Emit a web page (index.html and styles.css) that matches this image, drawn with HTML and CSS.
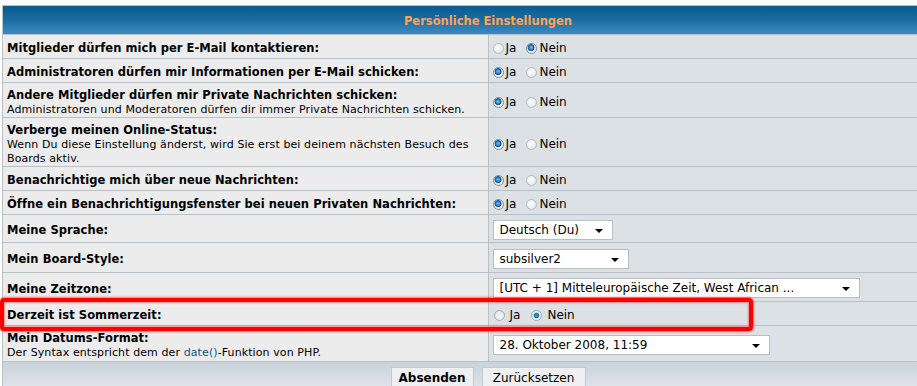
FILE: index.html
```html
<!DOCTYPE html>
<html lang="de">
<head>
<meta charset="utf-8">
<title>Persönliche Einstellungen</title>
<link rel="stylesheet" href="styles.css">
</head>
<body>
<div class="wrap">
<table class="tablebg">
  <tr class="r-head"><th colspan="2" class="head">Persönliche Einstellungen</th></tr>
  <tr>
    <td class="row1"><b class="genmed">Mitglieder dürfen mich per E-Mail kontaktieren:</b></td>
    <td class="row2"><span class="radios"><span class="radio"></span><span class="lbl">Ja</span><span class="radio on"></span><span class="lbl">Nein</span></span></td>
  </tr>
  <tr>
    <td class="row1"><b class="genmed">Administratoren dürfen mir Informationen per E-Mail schicken:</b></td>
    <td class="row2"><span class="radios"><span class="radio on"></span><span class="lbl">Ja</span><span class="radio"></span><span class="lbl">Nein</span></span></td>
  </tr>
  <tr class="r-two">
    <td class="row1"><b class="genmed">Andere Mitglieder dürfen mir Private Nachrichten schicken:</b><br><span class="gensmall">Administratoren und Moderatoren dürfen dir immer Private Nachrichten schicken.</span></td>
    <td class="row2"><span class="radios"><span class="radio on"></span><span class="lbl">Ja</span><span class="radio"></span><span class="lbl">Nein</span></span></td>
  </tr>
  <tr class="r-three">
    <td class="row1"><b class="genmed">Verberge meinen Online-Status:</b><br><span class="gensmall">Wenn Du diese Einstellung änderst, wird Sie erst bei deinem nächsten Besuch des Boards aktiv.</span></td>
    <td class="row2"><span class="radios"><span class="radio on"></span><span class="lbl">Ja</span><span class="radio"></span><span class="lbl">Nein</span></span></td>
  </tr>
  <tr>
    <td class="row1"><b class="genmed">Benachrichtige mich über neue Nachrichten:</b></td>
    <td class="row2"><span class="radios"><span class="radio on"></span><span class="lbl">Ja</span><span class="radio"></span><span class="lbl">Nein</span></span></td>
  </tr>
  <tr>
    <td class="row1"><b class="genmed">Öffne ein Benachrichtigungsfenster bei neuen Privaten Nachrichten:</b></td>
    <td class="row2"><span class="radios"><span class="radio on"></span><span class="lbl">Ja</span><span class="radio"></span><span class="lbl">Nein</span></span></td>
  </tr>
  <tr class="r-sel">
    <td class="row1"><b class="genmed">Meine Sprache:</b></td>
    <td class="row2 has-select"><span class="select w-lang"><span>Deutsch (Du)</span><i class="arrow"></i></span></td>
  </tr>
  <tr class="r-sel2">
    <td class="row1"><b class="genmed">Mein Board-Style:</b></td>
    <td class="row2 has-select"><span class="select w-style"><span>subsilver2</span><i class="arrow"></i></span></td>
  </tr>
  <tr class="r-sel3">
    <td class="row1"><b class="genmed">Meine Zeitzone:</b></td>
    <td class="row2 has-select"><span class="select w-tz"><span>[UTC + 1] Mitteleuropäische Zeit, West African ...</span><i class="arrow"></i></span></td>
  </tr>
  <tr>
    <td class="row1"><b class="genmed">Derzeit ist Sommerzeit:</b></td>
    <td class="row2"><span class="radios big"><span class="radio xp"></span><span class="lbl">Ja</span><span class="radio xp on"></span><span class="lbl">Nein</span></span></td>
  </tr>
  <tr class="r-date">
    <td class="row1"><b class="genmed">Mein Datums-Format:</b><br><span class="gensmall">Der Syntax entspricht dem der <a href="#" class="link">date()</a>-Funktion von PHP.</span></td>
    <td class="row2 has-select"><span class="select w-date"><span>28. Oktober 2008, 11:59</span><i class="arrow"></i></span></td>
  </tr>
  <tr class="r-cat">
    <td colspan="2" class="cat">
      <span class="btn main">Absenden</span><span class="btn lite">Zurücksetzen</span>
    </td>
  </tr>
</table>
<div class="highlight"></div>
</div>
</body>
</html>
```
FILE: styles.css
```css
html, body {
  margin: 0;
  padding: 0;
  background: #fff;
  overflow: hidden;
  width: 917px;
  height: 386px;
}
body {
  font-family: "DejaVu Sans", Verdana, sans-serif;
  color: #000;
}
.wrap {
  position: relative;
  padding: 5px 0 0 2px;
}
.tablebg {
  width: 972px;
  border-spacing: 1px;
  background: #b9c0c6;
  table-layout: fixed;
  font-size: 11px;
  line-height: 14px;
}
tr { height: 23px; }
.r-head { height: 28px; }
.r-two { height: 34px; }
.r-three { height: 48px; }
.r-sel { height: 27px; }
.r-sel2 { height: 29px; }
.r-sel3 { height: 28px; }
.r-date { height: 35px; }
.r-cat { height: 30px; }
.head {
  padding: 2px 5px 0;
  background: linear-gradient(#0a5a92 0%, #1a6aa2 45%, #3b8ac0 100%);
  color: #ffa34f;
  font-size: 11.5px;
  font-weight: bold;
  text-align: center;
}
td {
  padding: 4px 4px 0;
  vertical-align: middle;
}
td.has-select {
  padding: 2px 4px 0;
}
.row1 {
  width: 50%;
  background: #ececec;
}
.row2 {
  background: #dce1e5;
}
.genmed {
  font-size: 11.5px;
  letter-spacing: 0.05px;
  line-height: 15px;
}
.gensmall {
  font-size: 11px;
  letter-spacing: 0.1px;
  line-height: 13px;
}
.link {
  color: #105289;
  text-decoration: none;
}
.radios {
  display: flex;
  align-items: center;
  font-size: 12px;
  line-height: 15px;
}
.radio {
  width: 11px;
  height: 11px;
  border-radius: 50%;
  box-sizing: border-box;
  border: 1px solid #b4bcc4;
  background: radial-gradient(circle at 40% 40%, #ffffff 0, #e6e9ec 70%, #d0d5da 100%);
  margin-right: 2px;
}
.radio.on {
  border-color: #7d8a96;
  background: radial-gradient(circle at 45% 40%, #7fd0ff 0, #1b76b8 2.3px, #0d4f86 3.1px, #e8eef3 3.8px, #ffffff 100%);
}
.lbl {
  margin-right: 10px;
}
.radios.big .radio {
  width: 11px;
  height: 11px;
  margin-left: 1px;
  margin-right: 5px;
}
.radios.big .lbl {
  margin-right: 10px;
}
.radio.xp {
  border: 1px solid #a3acb4;
  background: radial-gradient(circle, #f4f4f4 0, #e0e3e6 100%);
}
.radio.xp.on {
  background: radial-gradient(circle at 50% 50%, #3ab0e0 0, #1a6ea8 2.2px, #e6eaee 3.2px, #ffffff 100%);
}
.select {
  display: inline-flex;
  align-items: center;
  justify-content: space-between;
  box-sizing: border-box;
  height: 20px;
  border: 1px solid #b8bec4;
  background: #fff;
  font-size: 12px;
  padding: 0 9px 0 6px;
  vertical-align: middle;
}
.arrow {
  width: 0;
  height: 0;
  border-left: 4px solid transparent;
  border-right: 4px solid transparent;
  border-top: 4px solid #000;
  margin-top: 2px;
}
.w-lang { width: 120px; }
.w-style { width: 136px; }
.w-tz { width: 367px; }
.w-date { width: 277px; }
.cat {
  padding: 5px 4px 0;
  background: linear-gradient(#c9d2da 0%, #d6dde3 50%, #e2e7eb 100%);
  text-align: center;
  vertical-align: top;
  font-size: 0;
}
.btn {
  display: inline-block;
  font-size: 12px;
  line-height: 20px;
  height: 24px;
  box-sizing: border-box;
  padding: 0 6px;
  border: 1px solid #c3c9ce;
  border-bottom: 0;
  background: #eef0f2;
  margin: 0 4px;
  vertical-align: top;
}
.btn.main {
  font-weight: bold;
  width: 83px;
}
.btn.lite {
  width: 104px;
}
.highlight {
  position: absolute;
  left: 0;
  top: 298px;
  width: 753px;
  height: 33px;
  box-sizing: border-box;
  border: 4px solid #f00;
  border-radius: 4px;
  box-shadow: 0 0 2px 1px rgba(255, 0, 0, 0.5), inset 0 0 2px 1px rgba(255, 0, 0, 0.4);
  pointer-events: none;
}
```
